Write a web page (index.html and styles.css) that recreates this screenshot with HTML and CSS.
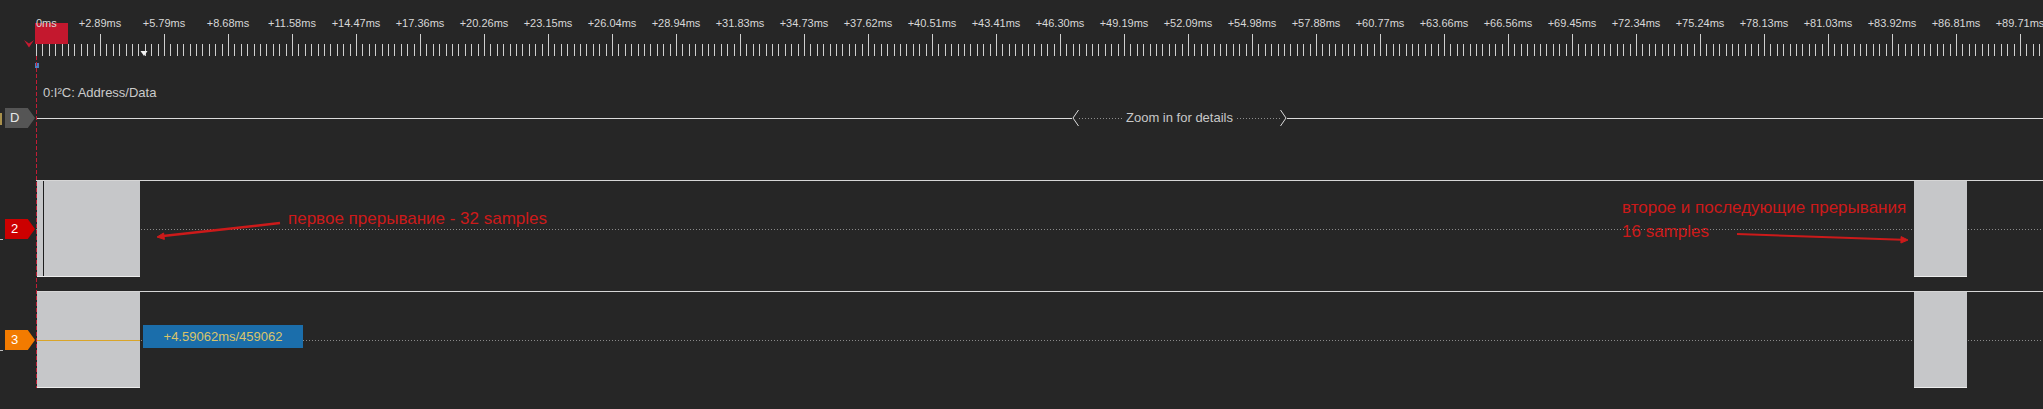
FILE: index.html
```html
<!DOCTYPE html>
<html>
<head>
<meta charset="utf-8">
<link rel="stylesheet" href="styles.css">
</head>
<body>
<div class="ruler">
  <div class="flag"></div>
  <svg class="chev" width="12" height="9" viewBox="0 0 12 9"><polygon points="0,0 5,3.5 10,0 5,7.5" fill="#c81a31"/></svg>
  <div class="labels">
    <span class="zero">0ms</span>
    <span>+2.89ms</span><span>+5.79ms</span><span>+8.68ms</span><span>+11.58ms</span><span>+14.47ms</span><span>+17.36ms</span><span>+20.26ms</span><span>+23.15ms</span><span>+26.04ms</span><span>+28.94ms</span><span>+31.83ms</span><span>+34.73ms</span><span>+37.62ms</span><span>+40.51ms</span><span>+43.41ms</span><span>+46.30ms</span><span>+49.19ms</span><span>+52.09ms</span><span>+54.98ms</span><span>+57.88ms</span><span>+60.77ms</span><span>+63.66ms</span><span>+66.56ms</span><span>+69.45ms</span><span>+72.34ms</span><span>+75.24ms</span><span>+78.13ms</span><span>+81.03ms</span><span>+83.92ms</span><span>+86.81ms</span><span>+89.71ms</span>
  </div>
  <svg class="ticks" width="2043" height="22">
    <defs>
      <pattern id="tk" x="36" y="0" width="64" height="22" patternUnits="userSpaceOnUse">
        <g stroke="#cfcfcf" stroke-width="1" shape-rendering="crispEdges">
          <line x1="0.5" y1="0" x2="0.5" y2="22"/>
          <line x1="6.9" y1="10" x2="6.9" y2="22"/>
          <line x1="13.3" y1="10" x2="13.3" y2="22"/>
          <line x1="19.7" y1="10" x2="19.7" y2="22"/>
          <line x1="26.1" y1="10" x2="26.1" y2="22"/>
          <line x1="32.5" y1="10" x2="32.5" y2="22"/>
          <line x1="38.9" y1="10" x2="38.9" y2="22"/>
          <line x1="45.3" y1="10" x2="45.3" y2="22"/>
          <line x1="51.7" y1="10" x2="51.7" y2="22"/>
          <line x1="58.1" y1="10" x2="58.1" y2="22"/>
        </g>
      </pattern>
    </defs>
    <rect x="36" y="0" width="2007" height="22" fill="url(#tk)"/>
  </svg>
  <svg class="down" width="8" height="7" viewBox="0 0 8 7"><polygon points="0.5,1 7.5,1 4,6" fill="#f2f2f2"/></svg>
  <div class="bm"></div>
</div>

<div class="ch ch-d">
  <div class="side"><div class="tag tag-d">D</div></div>
  <div class="wave">
    <div class="name">0:I²C: Address/Data</div>
    <div class="bus">
      <div class="seg seg-a"></div>
      <div class="zoomwrap">
        <svg width="7" height="18" viewBox="0 0 7 18"><path d="M6.5 1 L1 9 L6.5 17" stroke="#dcdcdc" stroke-width="1" fill="none"/></svg>
        <div class="dots"></div>
        <span class="zoomtext">Zoom in for details</span>
        <div class="dots"></div>
        <svg width="7" height="18" viewBox="0 0 7 18"><path d="M0.5 1 L6 9 L0.5 17" stroke="#dcdcdc" stroke-width="1" fill="none"/></svg>
      </div>
      <div class="seg seg-b"></div>
    </div>
  </div>
</div>

<div class="ch ch-2">
  <div class="side"><div class="tag tag-2">2</div></div>
  <div class="wave">
    <div class="mid"></div>
    <div class="pulse" style="left:1px;width:103px"><div class="edge"></div></div>
    <div class="pulse" style="left:1878px;width:53px"></div>
  </div>
</div>

<div class="ch ch-3">
  <div class="side"><div class="tag tag-3">3</div></div>
  <div class="wave">
    <div class="mid"></div>
    <div class="pulse" style="left:1px;width:103px"></div>
    <div class="pulse" style="left:1878px;width:53px"></div>
    <div class="meas"></div>
    <div class="meas-label">+4.59062ms/459062</div>
  </div>
</div>

<div class="cursor-line"></div>

<div class="note note-1">первое прерывание - 32 samples</div>
<div class="note note-2">второе и последующие прерывания<br>16 samples</div>

<svg class="arrows" width="2043" height="409">
  <g stroke="#cc1a1a" stroke-width="2.5" fill="#cc1a1a">
    <line x1="280" y1="223" x2="163" y2="236"/>
    <polygon points="157,237 164.4,239.4 163.6,233.0" stroke-width="1"/>
    <line x1="1737" y1="234" x2="1902" y2="239.8" stroke-width="2"/>
    <polygon points="1908,240 1900.9,243 1901.1,236.6" stroke-width="1"/>
  </g>
</svg>
</body>
</html>
```

FILE: styles.css
```css
* { box-sizing: border-box; }
html, body { margin: 0; padding: 0; }
body {
  width: 2043px;
  height: 409px;
  overflow: hidden;
  position: relative;
  background: #262626;
  font-family: "Liberation Sans", Arial, sans-serif;
  color: #d2d2d2;
}

/* ruler */
.ruler { position: relative; height: 70px; }
.flag {
  position: absolute; left: 35px; top: 23px;
  width: 33px; height: 21px; background: #c4182e;
}
.chev { position: absolute; left: 24px; top: 40px; }
.labels {
  position: relative;
  display: flex;
  height: 34px;
  padding: 16px 0 0 36px;
  font-size: 11px;
  line-height: 14px;
  white-space: nowrap;
  color: #d8d8d8;
}
.labels span { flex: 0 0 64px; text-align: center; }
.labels .zero { flex: 0 0 32px; text-align: left; }
.ticks { display: block; }
.down { position: absolute; left: 140px; top: 50px; }
.bm { position: absolute; left: 35px; top: 63px; width: 4px; height: 5px; background: #4d7fbf; }

/* channels */
.ch { display: grid; grid-template-columns: 36px 1fr; }
.ch-d { height: 110px; }
.ch-2 { height: 111px; }
.ch-3 { height: 118px; }
.side { position: relative; }
.side::after {
  content: ""; position: absolute; left: 0; top: 59px;
  width: 3px; height: 1px; background: #bdbdbd;
}
.ch-d .side::after { top: 43px; width: 2px; height: 12px; background: #a8904c; }
.tag {
  margin: 39px 0 0 5px;
  width: 30px; height: 20px;
  clip-path: polygon(0 0, 76% 0, 100% 50%, 76% 100%, 0 100%);
  color: #fff;
  font-size: 13px;
  line-height: 20px;
  padding-left: 6px;
}
.tag-d { margin-top: 38px; background: #555555; color: #e8e8e8; padding-left: 5px; }
.tag-2 { background: #cc0000; }
.tag-3 { background: #f27b00; }

.wave { position: relative; }
.ch-2 .wave, .ch-3 .wave { border-top: 1px solid #d6d6d6; }

.name {
  height: 38px;
  padding: 16px 0 0 7px;
  font-size: 13px;
  line-height: 14px;
  color: #cbcbcb;
  white-space: nowrap;
}
.bus { display: flex; align-items: center; height: 20px; }
.seg { height: 1px; background: #dcdcdc; }
.seg-a { flex: 0 0 1036px; }
.seg-b { flex: 1; }
.zoomwrap { flex: 0 0 215px; display: flex; align-items: center; }
.zoomwrap svg { display: block; flex: 0 0 7px; }
.dots {
  flex: 1; height: 1px;
  background: repeating-linear-gradient(to right, #8f8f8f 0 1px, transparent 1px 3px);
}
.zoomtext {
  padding: 0 4px;
  font-size: 13px;
  line-height: 14px;
  color: #c8c8c8;
  white-space: nowrap;
}

.mid {
  margin-top: 48px; height: 1px;
  background: repeating-linear-gradient(to right, #8a8a8a 0 1px, transparent 1px 3px);
}
.pulse {
  position: absolute; top: 0; height: 96px;
  background: #c6c7c9;
  border-bottom: 1px solid #ececec;
}
.edge { position: absolute; left: 6px; top: 0; bottom: 0; width: 1px; background: #1e1e1e; }

.meas {
  position: absolute; left: 1px; top: 48px;
  width: 103px; height: 1px; background: #d9a52a;
}
.meas-label {
  position: absolute; left: 107px; top: 33px;
  width: 160px; height: 23px;
  background: #1b6eab;
  color: #d9c46a;
  font-size: 13px;
  line-height: 23px;
  text-align: center;
}

.cursor-line {
  position: absolute; left: 36px; top: 56px;
  width: 1px; height: 332px;
  background: repeating-linear-gradient(to bottom, #c21d35 0 4px, transparent 4px 6px);
}

.note {
  position: absolute;
  color: #cc1a1a;
  font-size: 17px;
  line-height: 24px;
  white-space: nowrap;
}
.note-1 { left: 288px; top: 207px; }
.note-2 { left: 1622px; top: 196px; }

.arrows { position: absolute; left: 0; top: 0; pointer-events: none; }
```
